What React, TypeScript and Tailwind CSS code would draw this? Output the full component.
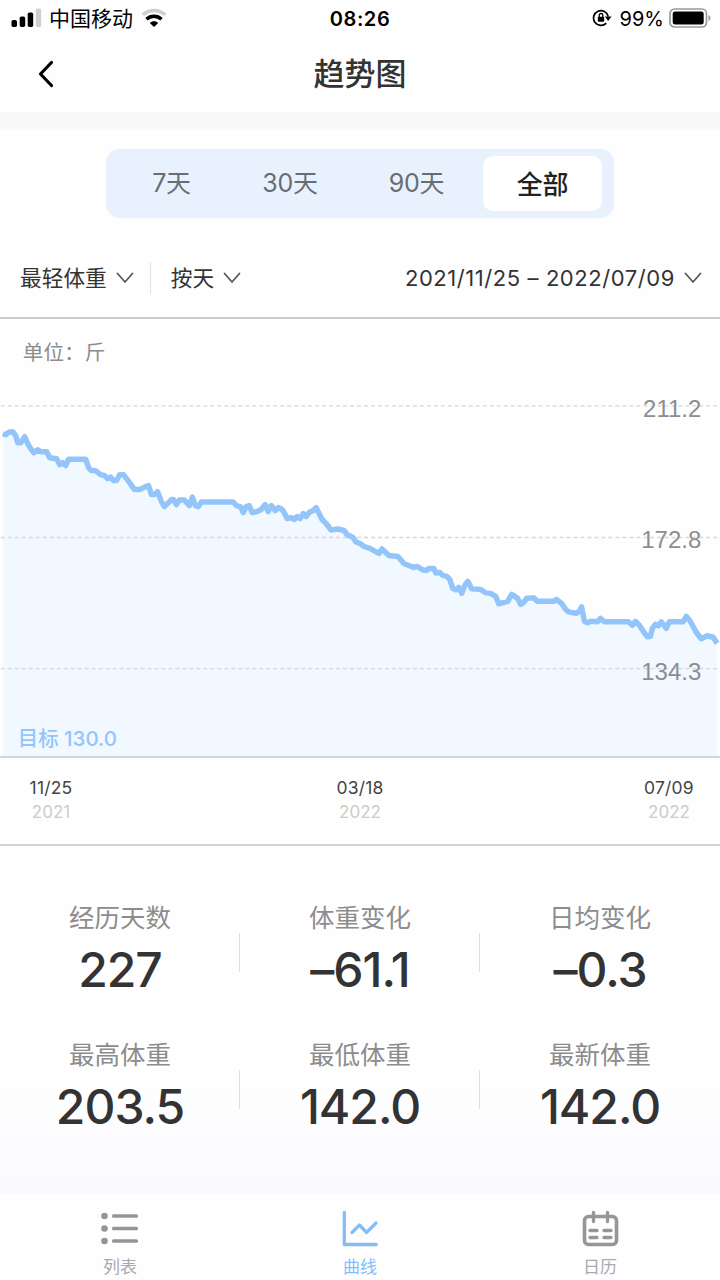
import React from "react";

type Point = [number, number];

// Curve vertices in page-space; the plot starts at y = 319.
const PLOT_TOP = 319;
const points: Point[] = [
  [2, 434], [5, 435], [8, 432.5], [12, 432], [15, 436], [17, 443], [20, 443], [24, 437], [27, 444], [30, 449], [33, 453],
  [37, 450], [40, 452], [46, 452], [49, 458], [56, 459], [59, 465], [62, 463], [65, 466], [68, 459.5], [85, 459.5],
  [88, 468], [90, 470.5], [95, 471], [100, 475], [104, 476], [107, 479], [110, 477.5], [113, 481], [116, 481],
  [119, 475], [123, 475], [129, 483], [134, 490], [139, 490], [144, 487.5], [148, 486], [151, 495], [154, 495],
  [157, 492], [161, 502], [164, 507], [171, 500], [173, 500], [176, 505], [179, 500.5], [184, 500.5], [189, 506],
  [192, 497.5], [195, 506], [198, 507], [201, 502.5], [233, 502.5], [236, 506], [240, 507], [243, 513], [246, 507],
  [249, 506], [252, 513], [257, 512], [261, 510], [265, 505], [268, 512], [271, 506], [275, 511], [278, 508],
  [282, 510], [284, 513], [287, 519], [291, 518], [294, 520], [297, 517], [300, 519], [303, 514], [306, 517],
  [309, 513], [313, 511], [316, 508], [319, 514], [322, 520], [326, 524], [331, 530.5], [338, 529.5], [344, 531],
  [347, 535], [353, 538], [356, 542.5], [360, 544], [364, 547], [370, 549], [379, 554], [382, 549.5], [389, 556],
  [398, 557], [404, 564], [409, 566], [414, 568], [417, 567], [423, 570.5], [427, 571], [429, 569], [434, 569],
  [436, 573.5], [440, 573], [443, 576], [447, 577], [450, 580], [453, 589], [456, 590.5], [459, 588], [462, 594],
  [465, 586], [468, 582], [472, 589.5], [481, 590], [486, 593.5], [491, 594], [496, 597], [499, 604.5], [508, 602],
  [512, 595], [518, 599], [521, 605], [524, 603], [527, 599], [534, 598.5], [538, 602], [554, 602], [557, 600],
  [562, 604], [566, 610], [569, 612.5], [574, 613.5], [577, 614], [580, 612], [582, 607.5], [585, 622],
  [588, 623.5], [591, 622], [598, 622.5], [601, 619], [605, 622.5], [629, 622.5], [633, 626], [636, 622],
  [640, 626], [644, 632], [648, 637.5], [651, 637], [653, 629], [656, 625], [659, 626.5], [662, 622.5],
  [667, 629], [670, 622.5], [684, 622.5], [687, 617], [691, 622], [697, 633], [702, 639.5], [708, 636.5],
  [714, 638], [718, 644],
];
const line = points.map(([x, y]) => `${x},${y - PLOT_TOP}`).join(" ");
const area = `2,438 ${line} 718,438`;
const grid = [
  { y: 87, label: "211.2" },
  { y: 219, label: "172.8" },
  { y: 350.5, label: "134.3" },
];

const stats = [
  [["经历天数", "227"], ["体重变化", "–61.1"], ["日均变化", "–0.3"]],
  [["最高体重", "203.5"], ["最低体重", "142.0"], ["最新体重", "142.0"]],
];

function Chevron({ className = "" }: { className?: string }) {
  return (
    <svg className={className} width="18" height="12" viewBox="0 0 18 12" fill="none" stroke="#555" strokeWidth="1.7" strokeLinecap="round" strokeLinejoin="round">
      <path d="M1.500 1.500 9 10l7.500-8.500" />
    </svg>
  );
}

function StatusBar() {
  return (
    <div className="flex h-9 items-center text-black">
      <div className="flex flex-1 items-center">
        <svg className="ml-[11px]" width="31" height="20" viewBox="0 0 31 20">
          <rect x="0.500" y="12" width="5.500" height="7" rx="1.700" />
          <rect x="8.700" y="8.500" width="5.500" height="10.500" rx="1.700" />
          <rect x="16.700" y="4.500" width="5.500" height="14.500" rx="1.700" />
          <rect x="24.700" y="0.500" width="5.500" height="18.500" rx="1.700" fill="#cfcfcf" />
        </svg>
        <span className="ml-[7px] pt-[2px] text-[21px] leading-9">中国移动</span>
        <svg className="ml-[8px]" width="26" height="20" viewBox="0 0 26 20" fill="none">
          <path d="M1.800 6.800C8 1 18 1 24.200 6.800" stroke="#cfcfcf" strokeWidth="3.600" />
          <path d="M5.500 11.300c4.200-4 10.800-4 15 0" stroke="#000" strokeWidth="3.500" />
          <path d="M8.800 14.900c2.400-2.300 6-2.300 8.400 0L13 19z" fill="#000" />
        </svg>
      </div>
      <span className="pt-px text-[20px] font-semibold leading-9 tracking-[0.6px]">08:26</span>
      <div className="flex flex-1 items-center justify-end">
        <svg width="20" height="18" viewBox="0 0 20 18" fill="none">
          <path d="M14.300 14.200A7.400 7.400 0 1 1 16.200 7.500" stroke="#000" strokeWidth="1.700" />
          <path d="M12.900 7.500h6.600L16.100 12z" fill="#000" />
          <rect x="5.800" y="7.800" width="6.400" height="5" rx=".7" fill="#000" />
          <path d="M7.200 8V6.300a1.800 1.800 0 0 1 3.600 0V8" stroke="#000" strokeWidth="1.300" />
        </svg>
        <span className="ml-[8px] pt-px text-[20px] leading-9">99%</span>
        <svg className="ml-[5px] mr-[8px]" width="43" height="20" viewBox="0 0 43 20" fill="none">
          <rect x="1" y="1" width="36.500" height="18" rx="4.500" stroke="#9b9b9b" strokeWidth="1.700" />
          <rect x="3.700" y="3.600" width="31" height="12.800" rx="2.500" fill="#000" />
          <path d="M39.500 7c2.600 1 2.600 5 0 6z" fill="#9b9b9b" />
        </svg>
      </div>
    </div>
  );
}

export default function App() {
  return (
    <div className="flex h-[1280px] w-[720px] flex-col overflow-hidden bg-[#fefefe] font-['Inter','Noto_Sans_CJK_SC',sans-serif] text-[#333]">
      <StatusBar />
      <header className="grid h-[76px] grid-cols-[1fr_auto_1fr] items-center">
        <svg className="ml-[38px]" width="16" height="28" viewBox="0 0 16 28" fill="none" stroke="#000" strokeWidth="3.200" strokeLinecap="round" strokeLinejoin="round">
          <path d="M13.500 2.500 2.500 14l11 11.500" />
        </svg>
        <h1 className="text-[31px] font-medium leading-[76px]">趋势图</h1>
        <span />
      </header>
      <div className="h-[18px] bg-[#f9f9f9]" />

      <div className="mx-auto mt-[19px] grid h-[69px] w-[508px] shrink-0 grid-cols-[131px_106px_140px_119px] items-center rounded-[14px] bg-[#e8f2fe] text-center text-[25px] leading-[57px] tracking-[-0.2px] text-[#696d72]">
        <span>7天</span>
        <span>30天</span>
        <span className="pl-[7px]">90天</span>
        <span className="h-[55px] rounded-[10px] bg-white text-[26px] font-medium text-[#222]">全部</span>
      </div>

      <div className="flex h-[99px] shrink-0 items-center pt-[20px] text-[21.700px] leading-8 text-[#333]">
        <span className="ml-5 pt-px">最轻体重</span>
        <Chevron className="ml-[9px]" />
        <span className="ml-[16px] h-8 w-px bg-[#e2e2e2]" />
        <span className="ml-[20px] pt-px">按天</span>
        <Chevron className="ml-[9px]" />
        <span className="ml-auto text-[22px] tracking-[0.570px]">2021/11/25 – 2022/07/09</span>
        <Chevron className="ml-[9px] mr-[18px]" />
      </div>

      <section className="flex h-[441px] shrink-0 flex-col border-b-2 border-t-2 border-b-[#d4d7dc] border-t-[#ccc]">
        <svg width="720" height="438" viewBox="0 0 720 438">
          <polygon points={area} fill="#f2f8ff" />
          <text x="22" y="41.500" fontSize="20.700" fill="#8c8c8c">单位：斤</text>
          {grid.map((g) => (
            <line key={g.label} x1="0" x2="720" y1={g.y} y2={g.y} stroke="#d5d7da" strokeWidth="1.300" strokeDasharray="4 3" />
          ))}
          <polyline points={line} fill="none" stroke="#93c5fb" strokeWidth="5.500" strokeLinejoin="round" />
          {grid.map((g) => (
            <text key={g.label} x="702" y={g.y + 11} textAnchor="end" fontSize="24" fill="#8b8d91" fontFamily="Liberation Sans, sans-serif">{g.label}</text>
          ))}
          <text x="17" y="427.500" fontSize="20.500" fontWeight="500" fill="#93c5fb">目标 130.0</text>
        </svg>
      </section>

      <div className="flex h-[88px] shrink-0 justify-between border-b-2 border-[#d2d2d2] px-[21px] pt-[18px] text-center">
        {[["11/25", "2021"], ["03/18", "2022"], ["07/09", "2022"]].map(([day, year]) => (
          <div key={day} className="w-[60px]">
            <div className="text-[17.500px] leading-6 tracking-[0.200px] text-[#444]">{day}</div>
            <div className="text-[17px] leading-6 text-[#ccc]">{year}</div>
          </div>
        ))}
      </div>

      <main className="flex flex-1 flex-col bg-linear-to-b from-[#fefefe] from-70% to-[#fafafe] pt-[56px]">
        {stats.map((row, i) => (
          <div key={i} className="grid h-[137px] grid-cols-3">
            {row.map(([label, value], j) => (
              <div key={label} className="flex">
                <div className="flex-1 text-center">
                  <div className="h-8 text-[25.500px] leading-8 text-[#8c8c8c]">{label}</div>
                  <div className="mt-[9px] text-[48px] font-[550] leading-[54px] tracking-[-1px]">{value}</div>
                </div>
                {j < 2 && <div className="-ml-px mt-[31px] h-[39px] w-px bg-[#dedede]" />}
              </div>
            ))}
          </div>
        ))}
      </main>

      <nav className="grid h-[86px] shrink-0 grid-cols-3 bg-[#fefefe] text-center text-[17px] leading-6 text-[#a9a9b0]">
        <div className="flex flex-col items-center pt-[16px]">
          <svg width="38" height="38" viewBox="0 0 38 38" fill="#959595">
            {[6, 18.5, 31].map((y) => (
              <g key={y}>
                <circle cx="3.500" cy={y} r="3.300" />
                <rect x="11" y={y - 1.7} width="26" height="3.400" rx="1.500" />
              </g>
            ))}
          </svg>
          <span className="mt-[7px]">列表</span>
        </div>
        <div className="flex flex-col items-center pt-[16px] text-[#86bdf7]">
          <svg width="38" height="38" viewBox="0 0 38 38" fill="none" stroke="currentColor" strokeWidth="3.300" strokeLinecap="round" strokeLinejoin="round">
            <path d="M3.300 2.500v32h32M11 22.500l7.500-7.500 7 7.500 9.500-9.500" />
          </svg>
          <span className="mt-[7px]">曲线</span>
        </div>
        <div className="flex flex-col items-center pt-[16px]">
          <svg width="38" height="38" viewBox="0 0 38 38" fill="none" stroke="#969696" strokeWidth="3.600" strokeLinecap="round">
            <rect x="3.500" y="6.500" width="32" height="28" rx="4" />
            <path d="M12.500 2.500v9M26.500 2.500v9M9 20.500h7M23 20.500h7M9 27.500h7M23 27.500h7" strokeWidth="3.300" />
          </svg>
          <span className="mt-[7px]">日历</span>
        </div>
      </nav>
    </div>
  );
}
